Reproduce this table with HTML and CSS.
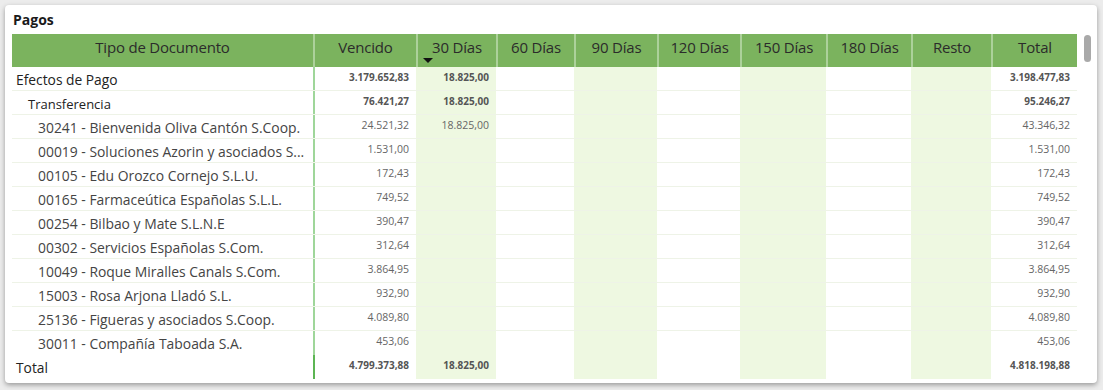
FILE: index.html
```html
<!DOCTYPE html>
<html lang="es">
<head>
<meta charset="utf-8">
<title>Pagos</title>
<link rel="stylesheet" href="styles.css">
</head>
<body>
<div class="card">
  <div class="title">Pagos</div>
  <div class="body">
    <div class="matrix">
      <div class="row head">
        <div class="hc">Tipo de Documento</div>
        <div class="hc">Vencido</div>
        <div class="hc">30 Días<span class="arrow"></span></div>
        <div class="hc">60 Días</div>
        <div class="hc">90 Días</div>
        <div class="hc">120 Días</div>
        <div class="hc">150 Días</div>
        <div class="hc">180 Días</div>
        <div class="hc">Resto</div>
        <div class="hc">Total</div>
      </div>
      <div class="row l0">
        <div class="lbl">Efectos de Pago</div>
        <div class="num">3.179.652,83</div><div class="num">18.825,00</div><div class="num"></div><div class="num"></div><div class="num"></div><div class="num"></div><div class="num"></div><div class="num"></div><div class="num">3.198.477,83</div>
      </div>
      <div class="row l1">
        <div class="lbl">Transferencia</div>
        <div class="num">76.421,27</div><div class="num">18.825,00</div><div class="num"></div><div class="num"></div><div class="num"></div><div class="num"></div><div class="num"></div><div class="num"></div><div class="num">95.246,27</div>
      </div>
      <div class="row l2">
        <div class="lbl">30241 - Bienvenida Oliva Cantón S.Coop.</div>
        <div class="num">24.521,32</div><div class="num">18.825,00</div><div class="num"></div><div class="num"></div><div class="num"></div><div class="num"></div><div class="num"></div><div class="num"></div><div class="num">43.346,32</div>
      </div>
      <div class="row l2">
        <div class="lbl">00019 - Soluciones Azorin y asociados S...</div>
        <div class="num">1.531,00</div><div class="num"></div><div class="num"></div><div class="num"></div><div class="num"></div><div class="num"></div><div class="num"></div><div class="num"></div><div class="num">1.531,00</div>
      </div>
      <div class="row l2">
        <div class="lbl">00105 - Edu Orozco Cornejo S.L.U.</div>
        <div class="num">172,43</div><div class="num"></div><div class="num"></div><div class="num"></div><div class="num"></div><div class="num"></div><div class="num"></div><div class="num"></div><div class="num">172,43</div>
      </div>
      <div class="row l2">
        <div class="lbl">00165 - Farmaceútica Españolas S.L.L.</div>
        <div class="num">749,52</div><div class="num"></div><div class="num"></div><div class="num"></div><div class="num"></div><div class="num"></div><div class="num"></div><div class="num"></div><div class="num">749,52</div>
      </div>
      <div class="row l2">
        <div class="lbl">00254 - Bilbao y Mate S.L.N.E</div>
        <div class="num">390,47</div><div class="num"></div><div class="num"></div><div class="num"></div><div class="num"></div><div class="num"></div><div class="num"></div><div class="num"></div><div class="num">390,47</div>
      </div>
      <div class="row l2">
        <div class="lbl">00302 - Servicios Españolas S.Com.</div>
        <div class="num">312,64</div><div class="num"></div><div class="num"></div><div class="num"></div><div class="num"></div><div class="num"></div><div class="num"></div><div class="num"></div><div class="num">312,64</div>
      </div>
      <div class="row l2">
        <div class="lbl">10049 - Roque Miralles Canals S.Com.</div>
        <div class="num">3.864,95</div><div class="num"></div><div class="num"></div><div class="num"></div><div class="num"></div><div class="num"></div><div class="num"></div><div class="num"></div><div class="num">3.864,95</div>
      </div>
      <div class="row l2">
        <div class="lbl">15003 - Rosa Arjona Lladó S.L.</div>
        <div class="num">932,90</div><div class="num"></div><div class="num"></div><div class="num"></div><div class="num"></div><div class="num"></div><div class="num"></div><div class="num"></div><div class="num">932,90</div>
      </div>
      <div class="row l2">
        <div class="lbl">25136 - Figueras y asociados S.Coop.</div>
        <div class="num">4.089,80</div><div class="num"></div><div class="num"></div><div class="num"></div><div class="num"></div><div class="num"></div><div class="num"></div><div class="num"></div><div class="num">4.089,80</div>
      </div>
      <div class="row l2 last">
        <div class="lbl">30011 - Compañía Taboada S.A.</div>
        <div class="num">453,06</div><div class="num"></div><div class="num"></div><div class="num"></div><div class="num"></div><div class="num"></div><div class="num"></div><div class="num"></div><div class="num">453,06</div>
      </div>
      <div class="row total">
        <div class="lbl">Total</div>
        <div class="num">4.799.373,88</div><div class="num">18.825,00</div><div class="num"></div><div class="num"></div><div class="num"></div><div class="num"></div><div class="num"></div><div class="num"></div><div class="num">4.818.198,88</div>
      </div>
    </div>
    <div class="scroll"><div class="thumb"></div></div>
  </div>
</div>
</body>
</html>
```

FILE: styles.css
```css
* { box-sizing: border-box; }

html, body {
  margin: 0;
  padding: 0;
}

body {
  width: 1103px;
  height: 390px;
  background: #ececec;
  font-family: "Open Sans", "Liberation Sans", sans-serif;
  overflow: hidden;
  padding: 5px 6px 0 5px;
}

.card {
  height: 378px;
  background: #ffffff;
  border-radius: 4px;
  box-shadow: 0 2px 5px rgba(0, 0, 0, 0.35);
  padding: 5px 0 0 7px;
}

.title {
  font-weight: 700;
  font-size: 14px;
  line-height: 20px;
  color: #1a1a1a;
  padding-left: 1px;
  height: 24px;
}

.body {
  display: flex;
  align-items: flex-start;
  gap: 7px;
}

.matrix {
  width: 1065px;
  display: flex;
  flex-direction: column;
}

.row {
  display: grid;
  grid-template-columns: 301px 103px 80px 78px 83px 83px 86px 85px 80px 86px;
  height: 24px;
  border-bottom: 1px solid #eef3e7;
}

.row.head {
  height: 33px;
  background: #7bb35e;
  border-bottom: none;
}

.hc {
  display: flex;
  flex-direction: column;
  align-items: center;
  padding-top: 3px;
  font-size: 15px;
  line-height: 20px;
  color: #2b2b2b;
  letter-spacing: -0.2px;
  border-left: 2px solid #acd19a;
}

.hc:first-child {
  border-left: none;
}

.arrow {
  align-self: flex-start;
  margin-left: 5px;
  margin-top: 1px;
  width: 0;
  height: 0;
  border-left: 5px solid transparent;
  border-right: 5px solid transparent;
  border-top: 5px solid #111;
}

.row:not(.head) > :nth-child(3),
.row:not(.head) > :nth-child(5),
.row:not(.head) > :nth-child(7),
.row:not(.head) > :nth-child(9) {
  background: #eef8e1;
}

.row:not(.head) > :nth-child(2) {
  border-left: 2px solid #9fd69a;
}

.row.total > :nth-child(2) {
  border-left-color: #5cb553;
}

.lbl {
  font-size: 13.9px;
  line-height: 20px;
  padding-top: 3px;
  white-space: nowrap;
  padding-right: 5px;
  color: #333;
}

.l0 .lbl, .total .lbl {
  padding-left: 4px;
  font-size: 13.8px;
  color: #222;
}

.l1 .lbl {
  padding-left: 16px;
  font-size: 13px;
  color: #222;
}

.l2 .lbl {
  padding-left: 26px;
  color: #444;
}

.num {
  font-size: 10.5px;
  line-height: 20px;
  text-align: right;
  padding-right: 7px;
  color: #666;
}

.l0 .num, .l1 .num, .total .num {
  font-weight: 700;
  font-size: 10px;
  color: #555;
}

.row.last, .row.total {
  border-bottom: none;
}

.scroll {
  width: 7px;
  padding-top: 1px;
}

.thumb {
  width: 7px;
  height: 27px;
  border-radius: 4px;
  background: #a9a9a9;
}
```
